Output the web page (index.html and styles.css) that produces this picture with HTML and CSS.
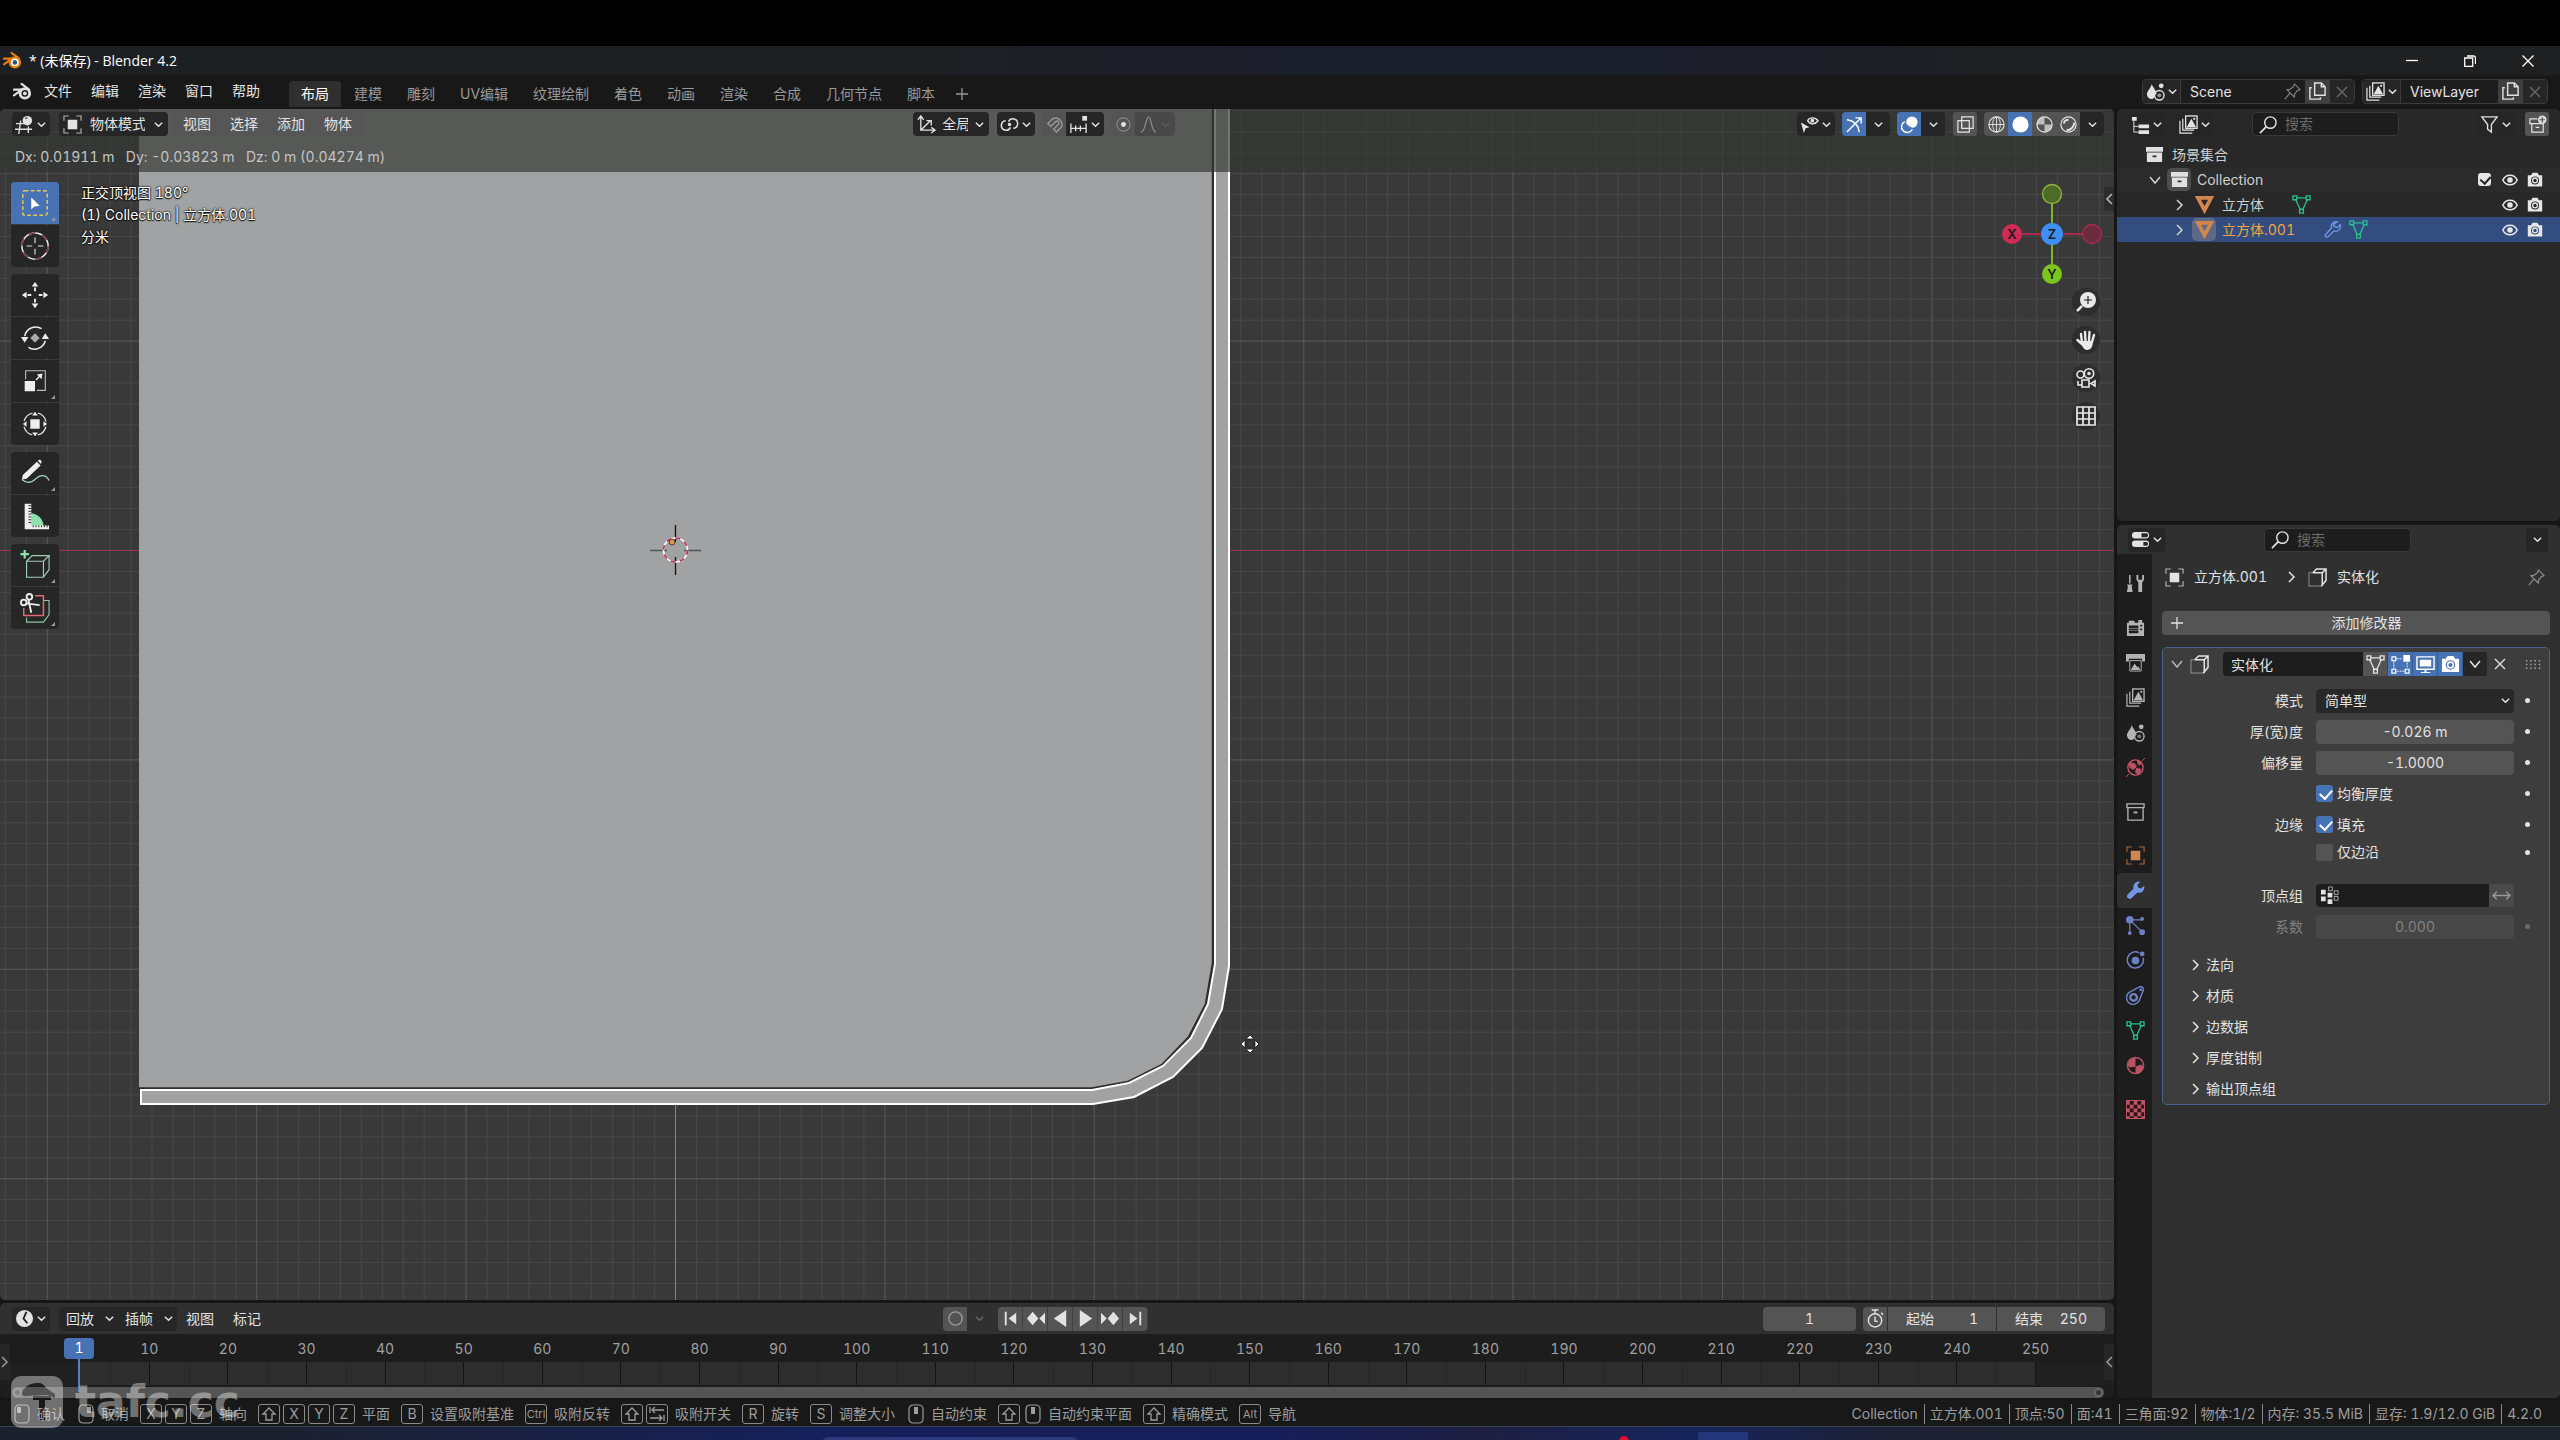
FILE: index.html
```html
<!DOCTYPE html>
<html lang="zh-CN">
<head>
<meta charset="utf-8">
<meta name="viewport" content="width=device-width, initial-scale=1">
<title>* (未保存) - Blender 4.2</title>
<link rel="stylesheet" href="styles.css">
</head>
<body>
<svg class="sprite" aria-hidden="true">
  <symbol id="chev" viewBox="0 0 12 12"><path d="M2 4l4 4 4-4" fill="none" stroke="currentColor" stroke-width="1.6"/></symbol>
  <symbol id="right" viewBox="0 0 12 12"><path d="M3 1l5 5-5 5" fill="none" stroke="currentColor" stroke-width="1.5"/></symbol>
  <symbol id="down" viewBox="0 0 12 12"><path d="M1 3l5 6 5-6" fill="none" stroke="currentColor" stroke-width="1.5"/></symbol>
  <symbol id="left" viewBox="0 0 12 12"><path d="M9 1L4 6l5 5" fill="none" stroke="currentColor" stroke-width="1.5"/></symbol>
  <symbol id="plus" viewBox="0 0 12 12"><path d="M6 0v12M0 6h12" stroke="currentColor" stroke-width="1.3"/></symbol>
  <symbol id="cross" viewBox="0 0 12 12"><path d="M1 1l10 10M11 1L1 11" stroke="currentColor" stroke-width="1.4"/></symbol>
  <symbol id="blender" viewBox="0 0 20 20"><path d="M9 2l8 6M1 8h9M1 14l7-5" fill="none" stroke="currentColor" stroke-width="2.2" stroke-linecap="round"/><circle cx="12.5" cy="12" r="5" fill="none" stroke="currentColor" stroke-width="3"/><circle cx="12.5" cy="12" r="2" fill="currentColor"/></symbol>
  <symbol id="logo" viewBox="0 0 20 20"><path d="M9 2l8 6M1 8h9M1 14l7-5" fill="none" stroke="#e87d0d" stroke-width="2.2" stroke-linecap="round"/><circle cx="12.5" cy="12" r="6.5" fill="#e87d0d"/><circle cx="12.5" cy="12" r="4" fill="#fff"/><circle cx="12.5" cy="12" r="2.4" fill="#265787"/></symbol>
  <symbol id="view3d" viewBox="0 0 20 20"><path d="M1 9h9M0 15h18M6 6L4 20M14 12v7" fill="none" stroke="currentColor" stroke-width="1.4"/><circle cx="13" cy="6" r="5" fill="currentColor"/><path d="M11 4a3 3 0 0 1 2-1" stroke="#333" stroke-width="1.3" fill="none"/></symbol>
  <symbol id="object" viewBox="0 0 20 20"><rect x="5" y="5" width="10" height="10" fill="currentColor"/><path d="M1 6V1h5M14 1h5v5M19 14v5h-5M6 19H1v-5" fill="none" stroke="currentColor" stroke-width="1.2" opacity=".75"/></symbol>
  <symbol id="axes" viewBox="0 0 20 20"><path d="M4 2v14h14M4 16L14 6M1 5l3-4 3 4M15 13l4 3-4 3M10 6h5v5" fill="none" stroke="currentColor" stroke-width="1.4"/></symbol>
  <symbol id="pivot" viewBox="0 0 20 20"><path d="M9 7a5 5 0 1 1 5 7M11 13a5 5 0 1 1-5-7" fill="none" stroke="currentColor" stroke-width="1.6"/><circle cx="10" cy="10" r="1.8" fill="currentColor"/></symbol>
  <symbol id="magnet" viewBox="0 0 20 20"><path d="M3 9l3 3 5-5a2 2 0 0 1 3 3l-5 5 3 3 5-5A6.700 6.700 0 0 0 8 4z" fill="none" stroke="currentColor" stroke-width="1.500"/></symbol>
  <symbol id="snapinc" viewBox="0 0 20 20"><path d="M2 9v10M18 9v10M7 11v6M12 11v6M2 14h16" fill="none" stroke="currentColor" stroke-width="1.4"/><rect x="14" y="1" width="5" height="5" fill="currentColor"/></symbol>
  <symbol id="prop" viewBox="0 0 20 20"><circle cx="10" cy="10" r="7" fill="none" stroke="currentColor" opacity=".45"/><circle cx="10" cy="10" r="2.600" fill="currentColor"/></symbol>
  <symbol id="falloff" viewBox="0 0 20 20"><path d="M2 18c5 0 5-16 8-16s3 16 8 16" fill="none" stroke="currentColor" stroke-width="1.4"/></symbol>
  <symbol id="vis" viewBox="0 0 20 20"><path d="M8 6c2-4 8-4 11 0-3 4-8 5-11 0z" fill="none" stroke="currentColor" stroke-width="1.5"/><circle cx="13" cy="6" r="2" fill="currentColor"/><path d="M1 8l9 5-4 1-2 5z" fill="currentColor"/></symbol>
  <symbol id="gizmo" viewBox="0 0 20 20"><path d="M2 18L17 3M11 3h6v6M2 5c8 1 12 5 13 13" fill="none" stroke="currentColor" stroke-width="1.500"/></symbol>
  <symbol id="overlay" viewBox="0 0 20 20"><circle cx="12.500" cy="7.500" r="6" fill="currentColor"/><path d="M5 7a6 6 0 1 0 8 8" fill="none" stroke="currentColor" stroke-width="1.500"/><path d="M7 10a6 6 0 0 0 5 3" fill="none" stroke="#4772b3" stroke-width="1.200"/></symbol>
  <symbol id="xray" viewBox="0 0 20 20"><path d="M6 2h12v12H6zM14 6H2v12h12z" fill="none" stroke="currentColor" stroke-width="1.300"/><path d="M6 10v4h4" fill="none" stroke="currentColor" stroke-dasharray="2 1.500"/></symbol>
  <symbol id="wire" viewBox="0 0 20 20"><circle cx="10" cy="10" r="8" fill="none" stroke="currentColor" stroke-width="1.200"/><ellipse cx="10" cy="10" rx="4" ry="8" fill="none" stroke="currentColor"/><path d="M2 10h16M10 2v16" stroke="currentColor"/></symbol>
  <symbol id="solid" viewBox="0 0 20 20"><circle cx="10" cy="10" r="8.500" fill="currentColor"/></symbol>
  <symbol id="matprev" viewBox="0 0 20 20"><circle cx="10" cy="10" r="8" fill="none" stroke="currentColor" stroke-width="1.300"/><path d="M10 2a8 8 0 0 0-8 8h8zM10 10h8a8 8 0 0 1-8 8z" fill="currentColor" opacity=".75"/></symbol>
  <symbol id="rendered" viewBox="0 0 20 20"><circle cx="10" cy="10" r="8" fill="none" stroke="currentColor" stroke-width="1.300"/><path d="M5 9a5 5 0 0 1 5-4M8 16a8 8 0 0 0 8-8" stroke="currentColor" stroke-width="2" fill="none"/></symbol>
  <symbol id="scene" viewBox="0 0 20 20"><path d="M6 2c2 5 5 7 5 10 0 1-1 1-2 2 0 3-1 4-3 4a5 5 0 0 1-5-5c0-4 4-6 5-11z" fill="currentColor"/><circle cx="16" cy="4" r="2.500" fill="currentColor"/><circle cx="14" cy="14" r="5" fill="none" stroke="currentColor" stroke-width="1.500"/><circle cx="14" cy="14" r="2" fill="currentColor" opacity=".6"/></symbol>
  <symbol id="layers" viewBox="0 0 20 20"><path d="M1 6v13h13M4 4v12h12" fill="none" stroke="currentColor" stroke-width="1.300"/><rect x="7" y="1" width="12" height="13" fill="none" stroke="currentColor" stroke-width="1.400"/><path d="M8 13l5-9 5 9z" fill="currentColor"/><circle cx="16" cy="4" r="1.200" fill="currentColor"/></symbol>
  <symbol id="pin" viewBox="0 0 20 20"><path d="M12 2l6 6-3 1-3 4v3L4 8h3l4-3zM7 12l-5 6" fill="none" stroke="currentColor" stroke-width="1.300" stroke-linejoin="round"/></symbol>
  <symbol id="copy" viewBox="0 0 20 20"><path d="M7 1h7l4 4v9H7zM14 1v4h4M4 6H2v12h11v-2" fill="none" stroke="currentColor" stroke-width="1.500"/></symbol>
  <symbol id="tree" viewBox="0 0 20 20"><path d="M1 2h5v4H1zM8 10h11v4H8zM8 16h11v4H8z" fill="currentColor"/><path d="M3 6v12h5M3 12h5" fill="none" stroke="currentColor"/></symbol>
  <symbol id="search" viewBox="0 0 20 20"><circle cx="12" cy="8" r="6" fill="none" stroke="currentColor" stroke-width="1.500"/><path d="M8 12l-7 7" stroke="currentColor" stroke-width="1.800"/></symbol>
  <symbol id="filter" viewBox="0 0 20 20"><path d="M2 2h16l-6 8v8l-4-3v-5z" fill="none" stroke="currentColor" stroke-width="1.400"/></symbol>
  <symbol id="newcol" viewBox="0 0 20 20"><path d="M10 4H2v5h14M4 9v9h12V9M8 13h4" fill="none" stroke="currentColor" stroke-width="1.300"/><circle cx="15" cy="5" r="4.500" fill="currentColor"/><path d="M15 2v6M12 5h6" stroke="#555" stroke-width="1.300"/></symbol>
  <symbol id="coll" viewBox="0 0 20 20"><path d="M1 2h18v5H1zM2 8h16v10H2z" fill="currentColor"/><path d="M8 11h4v2H8z" fill="#2a2a2a"/></symbol>
  <symbol id="collo" viewBox="0 0 20 20"><path d="M1 2h18v4H1zM2 6h16v13H2z" fill="none" stroke="currentColor" stroke-width="1.400"/><path d="M8 10h4v2H8z" fill="currentColor"/></symbol>
  <symbol id="tri" viewBox="0 0 20 20"><path d="M3 3h14l-7 13z" fill="none" stroke="currentColor" stroke-width="4"/></symbol>
  <symbol id="mesh" viewBox="0 0 20 20"><path d="M4 5l5 11M16 5l-5 11M5 3h10" fill="none" stroke="currentColor" stroke-width="1.400"/><path d="M1 1h4v4H1zM15 1h4v4h-4zM8 15h4v4H8z" fill="none" stroke="currentColor" stroke-width="1.400"/></symbol>
  <symbol id="wrench" viewBox="0 0 20 20"><path d="M15 1a5.500 5.500 0 0 0-7 7L2 14a2.700 2.700 0 0 0 4 4l6-6a5.500 5.500 0 0 0 7-7l-3 3-3-1-1-3z" fill="currentColor"/></symbol>
  <symbol id="wrencho" viewBox="0 0 20 20"><path d="M15 2a5 5 0 0 0-6 6.500L3 15a1.500 1.500 0 0 0 2.500 2.500l6-6A5 5 0 0 0 18 5l-3 3-3-1-1-2z" fill="none" stroke="currentColor" stroke-width="1.400"/></symbol>
  <symbol id="eye" viewBox="0 0 20 20"><path d="M1 10c4-8 14-8 18 0-4 8-14 8-18 0z" fill="none" stroke="currentColor" stroke-width="2"/><circle cx="10" cy="10" r="3.500" fill="currentColor"/></symbol>
  <symbol id="cam" viewBox="0 0 20 20"><path fill-rule="evenodd" d="M1 4h4l2-3h6l2 3h4v14H1zM10 5.500a5 5 0 1 0 0 10 5 5 0 0 0 0-10z" fill="currentColor"/><circle cx="10" cy="10.500" r="3" fill="none" stroke="currentColor" stroke-width="1.600"/></symbol>
  <symbol id="props" viewBox="0 0 20 20"><rect x="1" y="2" width="18" height="7" rx="3.500" fill="currentColor"/><rect x="1" y="11" width="18" height="7" rx="3.500" fill="currentColor"/><path d="M11 3.500h5a2 2 0 0 1 0 4h-5zM13 12.500h3a2 2 0 0 1 0 4h-3z" fill="#282828"/></symbol>
  <symbol id="tools" viewBox="0 0 20 20"><path d="M4 1v9" stroke="currentColor" stroke-width="1.600"/><path d="M1 11h6l-1 2 1 6H1l1-6zM11 1v5l2 3v10h4V9l2-3V1h-2v5h-4V1z" fill="currentColor"/></symbol>
  <symbol id="render" viewBox="0 0 20 20"><path fill-rule="evenodd" d="M1 5h2V3h6v2h4V2h4v3h2v14H1zM15 7h2v2h-2zM15 11h2v2h-2zM3 8h10v8H3z" fill="currentColor"/><path d="M3 11h10M3 13h10" stroke="currentColor" stroke-width=".6"/></symbol>
  <symbol id="output" viewBox="0 0 20 20"><path d="M0 1h20v8h-3V6H3v3H0z" fill="currentColor"/><path d="M4 8h12v11H4z" fill="none" stroke="currentColor"/><path d="M5 18l4-7 3 4 1-1 2 4z" fill="currentColor"/></symbol>
  <symbol id="world" viewBox="0 0 20 20"><circle cx="10" cy="10" r="8" fill="none" stroke="currentColor" stroke-width="1.500"/><path d="M4 5l5 1 2 3-3 3-4-2zM12 3l4 1-1 3h-2zM11 11l5 1-3 5-3-2zM0 20l3-3M17 3l3-3" fill="currentColor" stroke="currentColor"/></symbol>
  <symbol id="parts" viewBox="0 0 20 20"><circle cx="4" cy="4" r="4" fill="currentColor"/><circle cx="17" cy="3" r="2" fill="currentColor"/><circle cx="4" cy="18" r="2" fill="currentColor"/><circle cx="17" cy="17" r="3" fill="currentColor"/><path d="M4 4h13M4 4v14M4 4l13 13" stroke="currentColor" stroke-width="1.300"/></symbol>
  <symbol id="phys" viewBox="0 0 20 20"><path d="M14 2a8.500 8.500 0 1 0 4 5" fill="none" stroke="currentColor" stroke-width="1.500"/><circle cx="10" cy="10" r="4" fill="currentColor"/><circle cx="17" cy="3" r="2.500" fill="currentColor"/></symbol>
  <symbol id="constr" viewBox="0 0 20 20"><path d="M3 7L14 1a3 3 0 0 1 4 4l-4 10A7 7 0 1 1 3 7z" fill="none" stroke="currentColor" stroke-width="1.600"/><circle cx="8" cy="12" r="3.500" fill="none" stroke="currentColor" stroke-width="2.500"/><circle cx="15.500" cy="4" r="1.500" fill="currentColor"/></symbol>
  <symbol id="mat" viewBox="0 0 20 20"><circle cx="10" cy="10" r="8.500" fill="none" stroke="currentColor" stroke-width="1.600"/><path d="M10 2v9l-6 1-2-2a8 8 0 0 1 8-8zM10 11l6-2 2 2a8 8 0 0 1-8 8z" fill="currentColor"/></symbol>
  <symbol id="tex" viewBox="0 0 20 20"><path d="M0 0h20v20H0z" fill="currentColor"/><path d="M4 1h4v4H4zM12 1h4v4h-4zM1 5h3v4H1zM8 5h4v4H8zM16 5h3v4h-3zM4 9h4v4H4zM12 9h4v4h-4zM1 13h3v4H1zM8 13h4v4H8zM16 13h3v4h-3zM4 17h4v2H4zM12 17h4v2h-4z" fill="#2a1418"/></symbol>
  <symbol id="solidify" viewBox="0 0 20 20"><path d="M5 5l4-4h10v12l-5 6M5 5h10v14M15 5l4-4" fill="none" stroke="currentColor" stroke-width="1.600"/><path d="M5 5H1v14h14" fill="none" stroke="currentColor" opacity=".55"/></symbol>
  <symbol id="editm" viewBox="0 0 20 20"><path d="M3 7v8M6 17h8M17 8v6M6 4h6" fill="none" stroke="currentColor" stroke-dasharray="2 1"/><path d="M1 2h4v4H1zM1 15h4v4H1zM15 15h4v4h-4z" fill="none" stroke="currentColor" stroke-width="1.300"/><path d="M13 0h7v7h-7z" fill="currentColor"/></symbol>
  <symbol id="screen" viewBox="0 0 20 20"><path d="M1 2h18v13H1z" fill="none" stroke="currentColor" stroke-width="1.500"/><path d="M4 5h12v7H4zM9 15h2v3H9zM5 18h10v1H5z" fill="currentColor"/></symbol>
  <symbol id="grip" viewBox="0 0 20 20"><path d="M1 6h18M1 10h18M1 14h18" stroke="currentColor" stroke-width="1.500" stroke-dasharray="1.500 3"/></symbol>
  <symbol id="vgroup" viewBox="0 0 20 20"><path d="M1 4h5v5H1zM1 11h5v5H1zM8 7h5v5H8zM8 14h5v5H8z" fill="currentColor"/><path d="M9 1h4v4H9zM15 5h4v4h-4zM15 11h4v4h-4z" fill="none" stroke="currentColor" opacity=".7"/></symbol>
  <symbol id="arrows" viewBox="0 0 20 20"><path d="M1 10h18M5 6l-4 4 4 4M15 6l4 4-4 4" fill="none" stroke="currentColor" stroke-width="1.500"/></symbol>
  <symbol id="clock" viewBox="0 0 20 20"><circle cx="10" cy="10" r="9" fill="currentColor"/><path d="M12 3L9 10l4 5" fill="none" stroke="#222" stroke-width="2"/></symbol>
  <symbol id="rec" viewBox="0 0 20 20"><circle cx="10" cy="10" r="7" fill="none" stroke="currentColor" stroke-width="1.500"/></symbol>
  <symbol id="first" viewBox="0 0 20 20"><path d="M4 3h2v14H4zM16 4v12l-8-6z" fill="currentColor"/></symbol>
  <symbol id="prevk" viewBox="0 0 20 20"><path d="M7 3l6 7-6 7-6-7zM20 4v12l-6-6z" fill="currentColor"/></symbol>
  <symbol id="playb" viewBox="0 0 20 20"><path d="M16 1v18L3 10z" fill="currentColor"/></symbol>
  <symbol id="play" viewBox="0 0 20 20"><path d="M4 1v18l13-9z" fill="currentColor"/></symbol>
  <symbol id="nextk" viewBox="0 0 20 20"><path d="M13 3l6 7-6 7-6-7zM0 4v12l6-6z" fill="currentColor"/></symbol>
  <symbol id="last" viewBox="0 0 20 20"><path d="M14 3h2v14h-2zM4 4v12l8-6z" fill="currentColor"/></symbol>
  <symbol id="timer" viewBox="0 0 20 20"><circle cx="9.500" cy="12" r="7" fill="none" stroke="currentColor" stroke-width="1.500"/><path d="M6 1h7M9.500 1v4M9.500 8v5h3M16 4l2 2" fill="none" stroke="currentColor" stroke-width="1.500"/></symbol>
  <symbol id="mouse" viewBox="0 0 16 20"><rect x="1" y="1" width="14" height="18" rx="4" fill="none" stroke="currentColor" stroke-width="1.200"/></symbol>
  <symbol id="shift" viewBox="0 0 16 16"><path d="M8 2l6 6h-3v6H5V8H2z" fill="none" stroke="currentColor" stroke-width="1.300"/></symbol>
  <symbol id="tab" viewBox="0 0 16 16"><path d="M1 1v6M3 4h12M6 1L3 4l3 3M15 9v6M1 12h12M10 9l3 3-3 3" fill="none" stroke="currentColor" stroke-width="1.300"/></symbol>
</svg>

<div class="screen">
  <header class="titlebar">
    <svg class="i"><use href="#logo"/></svg>
    <h1>* (未保存) - Blender 4.2</h1>
    <div class="winbtns">
      <button aria-label="最小化"><svg viewBox="0 0 12 12"><path d="M0 5.500h12" stroke="#fff" stroke-width="1.300"/></svg></button>
      <button aria-label="还原"><svg viewBox="0 0 12 12"><path d="M.7 3h8v8.300h-8zM3 1h6.500a2 2 0 0 1 2 2v6" fill="none" stroke="#fff" stroke-width="1.300"/></svg></button>
      <button aria-label="关闭"><svg viewBox="0 0 12 12"><path d="M.5.5l11 11M11.500.5l-11 11" stroke="#fff" stroke-width="1.300"/></svg></button>
    </div>
  </header>

  <div class="topbar">
    <button class="bmenu" aria-label="Blender"><svg class="i"><use href="#blender"/></svg></button>
    <nav class="menus"><button>文件</button><button>编辑</button><button>渲染</button><button>窗口</button><button>帮助</button></nav>
    <nav class="tabs">
      <button class="on">布局</button><button>建模</button><button>雕刻</button><button>UV编辑</button><button>纹理绘制</button><button>着色</button><button>动画</button><button>渲染</button><button>合成</button><button>几何节点</button><button>脚本</button><button class="add" aria-label="添加工作区"><svg class="s"><use href="#plus"/></svg></button>
    </nav>
    <div class="idblock">
      <button class="ed dark" aria-label="浏览场景"><svg class="i"><use href="#scene"/></svg><svg class="c"><use href="#chev"/></svg></button>
      <input class="scene-name" aria-label="场景" value="Scene">
      <button class="pinb" aria-label="固定"><svg class="i"><use href="#pin"/></svg></button>
      <button class="cp" aria-label="新建场景"><svg class="i"><use href="#copy"/></svg></button>
      <button class="rm" aria-label="删除场景"><svg class="s"><use href="#cross"/></svg></button>
    </div>
    <div class="idblock">
      <button class="ed dark" aria-label="浏览视图层"><svg class="i"><use href="#layers"/></svg><svg class="c"><use href="#chev"/></svg></button>
      <input class="layer-name" aria-label="视图层" value="ViewLayer">
      <button class="cp" aria-label="新建视图层"><svg class="i"><use href="#copy"/></svg></button>
      <button class="rm" aria-label="删除视图层"><svg class="s"><use href="#cross"/></svg></button>
    </div>
  </div>

  <main class="workspace">
    <div class="leftcol">
      <section class="viewport" aria-label="3D 视图">
        <svg class="canvas" aria-hidden="true">
          <defs>
            <pattern id="minor" x="675" y="441" width="20.940" height="20.940" patternUnits="userSpaceOnUse"><path d="M.5 0v21M0 .5h21" stroke="#474747"/></pattern>
            <pattern id="major" x="675" y="441" width="209.400" height="209.400" patternUnits="userSpaceOnUse"><path d="M.5 0v210M0 .5h210" stroke="#545454"/></pattern>
          </defs>
          <rect width="100%" height="100%" fill="#393939"/>
          <rect width="100%" height="100%" fill="url(#minor)"/>
          <rect width="100%" height="100%" fill="url(#major)"/>
          <path d="M0 441.500h4000" stroke="#9a3549"/>
          <path d="M675.500 0v4000" stroke="#7f9827"/>
          <path d="M139 0h1074v854l-7 40-17 34-27 27-34 17-37 7H139z" fill="#a1a2a3"/>
          <path d="M1213 0v854l-7 41-17 33-27 28-34 17-36 6.500H139" fill="none" stroke="#2c2d2e" stroke-width="2.500"/>
          <path d="M1215 0v855l-7 40-17 34-28 28-34 17-37 6.500H141V995h952l41-7 39-20 29-29 20-39 7-43V0z" fill="#a1a2a3"/>
          <path d="M1215 -5v860l-7 40-17 34-28 28-34 17-37 7H141v14h952l41-7 39-20 29-29 20-39 7-43V-5" fill="none" stroke="#fff" stroke-width="2"/>
          <g fill="none">
            <path d="M650 441.500h17M684 441.500h17" stroke="#4c5557" stroke-width="1.300"/><path d="M675.500 416v17M675.500 448v18" stroke="#111" stroke-width="1.300"/>
            <circle cx="675.500" cy="441" r="12" stroke="#fff" stroke-width="1.600"/><circle cx="675.500" cy="441" r="12" stroke="#c2255c" stroke-width="1.600" stroke-dasharray="4.700 4.700"/>
            <circle cx="672" cy="433" r="3" fill="#d8954a" stroke="#5a3b20"/>
          </g>
          <g transform="translate(1250 935)" fill="#fff" stroke="#111" stroke-width=".8"><path d="M0-9l4 4H-4zM0 9l4-4H-4zM-9 0l4-4v8zM9 0l-4-4v8z"/><circle r="3.500" fill="none" stroke="#222"/></g>
        </svg>

        <div class="vhead">
          <div class="bar">
            <button class="ed dark" aria-label="编辑器类型"><svg class="i"><use href="#view3d"/></svg><svg class="c"><use href="#chev"/></svg></button>
            <label class="combo dark mode"><svg class="i"><use href="#object"/></svg><select aria-label="模式"><option>物体模式</option></select><svg class="c"><use href="#chev"/></svg></label>
            <nav class="menus"><button>视图</button><button>选择</button><button>添加</button><button>物体</button></nav>
            <span class="sp-a"></span>
            <label class="combo dark orient"><svg class="i"><use href="#axes"/></svg><select aria-label="坐标系"><option>全局</option></select><svg class="c"><use href="#chev"/></svg></label>
            <button class="ed dark" aria-label="轴心点"><svg class="i"><use href="#pivot"/></svg><svg class="c"><use href="#chev"/></svg></button>
            <div class="group"><button class="ib lit dim" aria-label="吸附"><svg class="i"><use href="#magnet"/></svg></button><button class="ed dark" aria-label="吸附至"><svg class="i"><use href="#snapinc"/></svg><svg class="c"><use href="#chev"/></svg></button></div>
            <div class="group"><button class="ib lit" aria-label="衰减编辑"><svg class="i"><use href="#prop"/></svg></button><button class="ed faint" aria-label="衰减"><svg class="i"><use href="#falloff"/></svg><svg class="c fade"><use href="#chev"/></svg></button></div>
            <span class="sp-b"></span>
            <button class="ed dark" aria-label="可见性"><svg class="i"><use href="#vis"/></svg><svg class="c"><use href="#chev"/></svg></button>
            <div class="group"><button class="ib blue" aria-label="Gizmo"><svg class="i"><use href="#gizmo"/></svg></button><button class="ib dark" aria-label="Gizmo 选项"><svg class="c"><use href="#chev"/></svg></button></div>
            <div class="group"><button class="ib blue" aria-label="叠加层"><svg class="i"><use href="#overlay"/></svg></button><button class="ib dark" aria-label="叠加层选项"><svg class="c"><use href="#chev"/></svg></button></div>
            <button class="ib lit" aria-label="透视模式"><svg class="i"><use href="#xray"/></svg></button>
            <div class="group"><button class="ib lit" aria-label="线框"><svg class="i"><use href="#wire"/></svg></button><button class="ib blue" aria-label="实体"><svg class="i"><use href="#solid"/></svg></button><button class="ib lit" aria-label="材质预览"><svg class="i"><use href="#matprev"/></svg></button><button class="ib lit" aria-label="渲染预览"><svg class="i"><use href="#rendered"/></svg></button><button class="ib dark" aria-label="着色选项"><svg class="c"><use href="#chev"/></svg></button></div>
          </div>
          <p class="status">Dx: 0.01911 m&nbsp;&nbsp; Dy: -0.03823 m&nbsp;&nbsp; Dz: 0 m (0.04274 m)</p>
        </div>

        <div class="vbody">
          <div class="toolbar">
            <div class="tgroup">
              <button class="on more" aria-label="框选"><svg viewBox="0 0 32 32"><rect x="3" y="3" width="26" height="26" rx="2" fill="none" stroke="#e8c65a" stroke-width="1.600" stroke-dasharray="4 2.500"/><path d="M12 10v13l3-3 6-1z" fill="#fff"/></svg></button>
              <button aria-label="游标"><svg viewBox="0 0 32 32"><circle cx="16" cy="16" r="14" fill="none" stroke="#e9e9e9" stroke-width="1.600"/><circle cx="16" cy="16" r="14" fill="none" stroke="#7d3044" stroke-width="1.600" stroke-dasharray="7.330 7.330"/><path d="M16 7v6M16 19v6M7 16h6M19 16h6" stroke="#ddd" stroke-width="1.200"/></svg></button>
            </div>
            <div class="tgroup">
              <button aria-label="移动"><svg viewBox="0 0 32 32" fill="#eee"><path d="M16 2l3.500 5h-7zM16 30l3.500-5h-7zM2 16l5-3.500v7zM30 16l-5-3.500v7zM15 8h2v4h-2zM15 20h2v4h-2zM8 15h4v2H8zM20 15h4v2h-4z"/></svg></button>
              <button aria-label="旋转"><svg viewBox="0 0 32 32"><path d="M5 14a12 12 0 0 1 18-8M27 19a12 12 0 0 1-18 7" fill="none" stroke="#eee" stroke-width="1.600"/><path d="M1 15h8l-4 6zM23 17h8l-4-6z" fill="#eee"/><path d="M16 11l5 5-5 5-5-5z" fill="#aaa"/></svg></button>
              <button class="more" aria-label="缩放"><svg viewBox="0 0 32 32"><path d="M6 14V5h21v21H18" fill="none" stroke="#bbb" stroke-width="1.200"/><path d="M5 16h11v11H5zM24 8l-1 6-5-5z" fill="#eee"/><path d="M17 15l4-4" stroke="#eee" stroke-width="1.600"/></svg></button>
              <button aria-label="变换"><svg viewBox="0 0 32 32"><circle cx="16" cy="16" r="12" fill="none" stroke="#ddd" stroke-width="1.400" stroke-dasharray="12.800 6" stroke-dashoffset="-3"/><path d="M11 11h10v10H11zM16 3l3 4h-6zM16 29l3-4h-6zM3 16l4-3v6zM29 16l-4-3v6z" fill="#eee"/></svg></button>
            </div>
            <div class="tgroup">
              <button class="more" aria-label="标注"><svg viewBox="0 0 32 32"><path d="M2 23c6 5 11 3 15-1 5-5 11-4 14 2" fill="none" stroke="#a5d8c0" stroke-width="1.400"/><path d="M18 4l4 4L7 22l-5 1 1-5zM19 3l1-1q3-1 3 3l-1 1z" fill="#eee"/></svg></button>
              <button aria-label="测量"><svg viewBox="0 0 32 32"><path d="M11 13a14 14 0 0 1 14 14H11z" fill="#8fe0af"/><path d="M5 3h7v25H5zM5 26h26v4H5z" fill="#eee"/><path d="M9 5h3M9 8h3M9 11h3M9 14h3M9 17h3M9 20h3M9 23h3M14 26v2M17 26v2M20 26v2M23 26v2M26 26v2M29 26v2" stroke="#222"/></svg></button>
            </div>
            <div class="tgroup">
              <button class="more" aria-label="添加立方体"><svg viewBox="0 0 32 32"><path d="M5 0v9M.500 4.500h9" stroke="#8fe0af" stroke-width="2.400"/><path d="M7 12h18v17H7zM7 12l6-6h18l-6 6M31 6v15l-6 8" fill="none" stroke="#9ecdb2" stroke-width="1.200"/></svg></button>
              <button class="more" aria-label="切割"><svg viewBox="0 0 32 32"><path d="M7 26v5h18l6-8V8h-6" fill="none" stroke="#86c9a5" stroke-width="1.200"/><path d="M16 3h9v21H4v-8" fill="none" stroke="#e06a78" stroke-width="1.600"/><path d="M9 7l3 14M6 11l15 2" stroke="#eee" stroke-width="2"/><circle cx="10" cy="4" r="3" fill="none" stroke="#eee" stroke-width="2"/><circle cx="4" cy="10" r="3" fill="none" stroke="#eee" stroke-width="2"/></svg></button>
            </div>
          </div>
          <div class="info"><p>正交顶视图 180°</p><p>(1) Collection | 立方体.001</p><p>分米</p></div>
          <div class="navcol">
            <svg class="axisgizmo" viewBox="0 0 104 104" role="img" aria-label="视图轴">
              <path d="M52 22v60" stroke="#80b52a" stroke-width="2"/><path d="M22 52h60" stroke="#a82b4e" stroke-width="2"/>
              <circle cx="52" cy="12" r="9.500" fill="#4d6b26" stroke="#8fb63e" stroke-width="1.300"/><circle cx="92" cy="52" r="9.500" fill="#6d2b40" stroke="#a82b4e" stroke-width="1.300"/>
              <circle cx="12" cy="52" r="10" fill="#d12a57"/><circle cx="52" cy="92" r="10" fill="#7bc61c"/><circle cx="52" cy="52" r="11" fill="#3d8ff5"/>
              <g class="axl"><text x="12" y="57">X</text><text x="52" y="97">Y</text><text x="52" y="57">Z</text></g>
            </svg>
            <button aria-label="缩放视图"><svg viewBox="0 0 20 20"><circle cx="12" cy="8" r="8" fill="#e9e9e9"/><path d="M6 14l-5 5" stroke="#e9e9e9" stroke-width="2.500"/><path d="M12 4v8M8 8h8" stroke="#222" stroke-width="1.200"/></svg></button>
            <button aria-label="平移视图"><svg viewBox="0 0 20 20"><path d="M6 13L5 4M9.500 11L9 2M13 11l.5-9M16 12l2-7M7 15L1.500 10" stroke="#e9e9e9" stroke-width="2.400" stroke-linecap="round"/><path d="M5 11h12c0 5-2 9-6 9-3 0-5-3-6-9z" fill="#e9e9e9"/></svg></button>
            <button aria-label="摄像机视图"><svg viewBox="0 0 20 20" fill="none" stroke="#e9e9e9" stroke-width="1.600"><circle cx="4.500" cy="6.500" r="3.500"/><circle cx="13" cy="5.500" r="4.700"/><circle cx="13" cy="5.500" r="1"/><path d="M6 12h7v7H6zM2 13v4h4M19 13v5l-4-2.500z"/></svg></button>
            <button aria-label="正交切换"><svg viewBox="0 0 20 20"><path d="M1 1h18v18H1zM7 1v18M13 1v18M1 7h18M1 13h18" fill="none" stroke="#e9e9e9" stroke-width="1.700"/></svg></button>
          </div>
        </div>
        <button class="flap" aria-label="展开侧栏"><svg class="s"><use href="#left"/></svg></button>
      </section>

      <section class="timeline" aria-label="时间线">
        <div class="bar thead">
          <button class="ed dark" aria-label="编辑器类型"><svg class="i"><use href="#clock"/></svg><svg class="c"><use href="#chev"/></svg></button>
          <div class="group"><button class="pop">回放<svg class="c"><use href="#chev"/></svg></button><button class="pop">插帧<svg class="c"><use href="#chev"/></svg></button></div>
          <nav class="menus"><button>视图</button><button>标记</button></nav>
          <span class="sp-c"></span>
          <div class="group"><button class="ib lit dim" aria-label="自动插帧"><svg class="i"><use href="#rec"/></svg></button><button class="ib fade" aria-label="自动插帧选项"><svg class="c"><use href="#chev"/></svg></button></div>
          <div class="group play">
            <button aria-label="起始帧"><svg class="i"><use href="#first"/></svg></button><button aria-label="上一关键帧"><svg class="i"><use href="#prevk"/></svg></button><button aria-label="倒放"><svg class="i"><use href="#playb"/></svg></button><button aria-label="播放"><svg class="i"><use href="#play"/></svg></button><button aria-label="下一关键帧"><svg class="i"><use href="#nextk"/></svg></button><button aria-label="末帧"><svg class="i"><use href="#last"/></svg></button>
          </div>
          <span class="sp-d"></span>
          <input class="frame" aria-label="当前帧" value="1">
          <div class="group range"><button class="ib lit" aria-label="预览范围"><svg class="i"><use href="#timer"/></svg></button><label><span>起始</span><input value="1"></label><label><span>结束</span><input value="250"></label></div>
        </div>
        <div class="track">
          <ol class="ruler"><li>10</li><li>20</li><li>30</li><li>40</li><li>50</li><li>60</li><li>70</li><li>80</li><li>90</li><li>100</li><li>110</li><li>120</li><li>130</li><li>140</li><li>150</li><li>160</li><li>170</li><li>180</li><li>190</li><li>200</li><li>210</li><li>220</li><li>230</li><li>240</li><li>250</li></ol>
          <div class="scroll"><i></i><i></i></div>
          <div class="playhead"><b>1</b></div>
          <button class="tflap l" aria-label="展开通道"><svg class="s"><use href="#right"/></svg></button>
          <button class="tflap r" aria-label="展开侧栏"><svg class="s"><use href="#left"/></svg></button>
        </div>
      </section>
    </div>

    <div class="rightcol">
      <section class="outliner" aria-label="大纲视图">
        <div class="bar ohead">
          <button class="ed dark" aria-label="编辑器类型"><svg class="i"><use href="#tree"/></svg><svg class="c"><use href="#chev"/></svg></button>
          <button class="ed dark" aria-label="显示模式"><svg class="i"><use href="#layers"/></svg><svg class="c"><use href="#chev"/></svg></button>
          <label class="search"><svg class="i"><use href="#search"/></svg><input type="search" placeholder="搜索" aria-label="搜索"></label>
          <button class="ed dark" aria-label="过滤"><svg class="i"><use href="#filter"/></svg><svg class="c"><use href="#chev"/></svg></button>
          <button class="ib lit" aria-label="新建集合"><svg class="i"><use href="#newcol"/></svg></button>
        </div>
        <ul class="tree">
          <li class="l0"><span class="ic"><svg class="i"><use href="#coll"/></svg></span>场景集合</li>
          <li class="l1 alt"><svg class="ar"><use href="#down"/></svg><span class="ic halo"><svg class="i"><use href="#coll"/></svg></span>Collection
            <span class="tog"><input type="checkbox" class="wcheck" aria-label="排除" checked><svg class="i"><use href="#eye"/></svg><svg class="i"><use href="#cam"/></svg></span></li>
          <li class="l2"><svg class="ar"><use href="#right"/></svg><span class="ic orange"><svg class="i"><use href="#tri"/></svg></span>立方体
            <span class="data"><svg class="i green"><use href="#mesh"/></svg></span><span class="tog"><svg class="i"><use href="#eye"/></svg><svg class="i"><use href="#cam"/></svg></span></li>
          <li class="l2 sel"><svg class="ar"><use href="#right"/></svg><span class="ic orange halo"><svg class="i"><use href="#tri"/></svg></span><em>立方体.001</em>
            <span class="data"><svg class="i bluei"><use href="#wrencho"/></svg><svg class="i green"><use href="#mesh"/></svg></span><span class="tog"><svg class="i"><use href="#eye"/></svg><svg class="i"><use href="#cam"/></svg></span></li>
        </ul>
      </section>

      <section class="properties" aria-label="属性">
        <div class="bar phead">
          <button class="ed dark" aria-label="编辑器类型"><svg class="i"><use href="#props"/></svg><svg class="c"><use href="#chev"/></svg></button>
          <label class="search"><svg class="i"><use href="#search"/></svg><input type="search" placeholder="搜索" aria-label="搜索属性"></label>
          <button class="ib dark" aria-label="选项"><svg class="c"><use href="#chev"/></svg></button>
        </div>
        <div class="pmain">
          <nav class="ptabs">
            <button aria-label="工具"><svg class="i"><use href="#tools"/></svg></button>
            <div><button aria-label="渲染"><svg class="i"><use href="#render"/></svg></button><button aria-label="输出"><svg class="i"><use href="#output"/></svg></button><button aria-label="视图层"><svg class="i"><use href="#layers"/></svg></button><button aria-label="场景"><svg class="i"><use href="#scene"/></svg></button><button class="red" aria-label="世界"><svg class="i"><use href="#world"/></svg></button></div>
            <button aria-label="集合"><svg class="i"><use href="#collo"/></svg></button>
            <div><button class="orange" aria-label="物体"><svg class="i"><use href="#object"/></svg></button><button class="bluei on" aria-label="修改器"><svg class="i"><use href="#wrench"/></svg></button><button class="bluep" aria-label="粒子"><svg class="i"><use href="#parts"/></svg></button><button class="bluep" aria-label="物理"><svg class="i"><use href="#phys"/></svg></button><button class="bluep" aria-label="约束"><svg class="i"><use href="#constr"/></svg></button><button class="green" aria-label="数据"><svg class="i"><use href="#mesh"/></svg></button><button class="red" aria-label="材质"><svg class="i"><use href="#mat"/></svg></button></div>
            <button class="red" aria-label="纹理"><svg class="i"><use href="#tex"/></svg></button>
          </nav>
          <div class="pcontent">
            <div class="crumbs"><svg class="i"><use href="#object"/></svg><span class="c1">立方体.001</span><svg class="s"><use href="#right"/></svg><svg class="i"><use href="#solidify"/></svg><span>实体化</span><button aria-label="固定"><svg class="i"><use href="#pin"/></svg></button></div>
            <button class="addmod"><svg class="s"><use href="#plus"/></svg><span>添加修改器</span></button>
            <div class="panel">
              <div class="mhead">
                <button class="exp" aria-label="折叠"><svg class="s"><use href="#down"/></svg></button>
                <svg class="i"><use href="#solidify"/></svg>
                <input class="mname" aria-label="名称" value="实体化">
                <button class="mb lit" aria-label="在编辑模式显示笼"><svg class="i"><use href="#mesh"/></svg></button><button class="mb blue" aria-label="编辑模式"><svg class="i"><use href="#editm"/></svg></button><button class="mb blue" aria-label="实时"><svg class="i"><use href="#screen"/></svg></button><button class="mb blue" aria-label="渲染"><svg class="i"><use href="#cam"/></svg></button><button class="ib dark" aria-label="选项"><svg class="s"><use href="#down"/></svg></button>
                <button class="del" aria-label="移除"><svg class="s"><use href="#cross"/></svg></button>
                <svg class="i grip"><use href="#grip"/></svg>
              </div>
              <div class="row"><label for="m">模式</label><span class="field drop"><select id="m"><option>简单型</option></select><svg class="c"><use href="#chev"/></svg></span><i class="dot"></i></div>
              <div class="row"><label for="t">厚(宽)度</label><input class="field num" id="t" value="-0.026 m"><i class="dot"></i></div>
              <div class="row"><label for="o">偏移量</label><input class="field num" id="o" value="-1.0000"><i class="dot"></i></div>
              <div class="row"><span></span><label class="ck"><input type="checkbox" checked>均衡厚度</label><i class="dot"></i></div>
              <div class="row"><span class="lab">边缘</span><label class="ck"><input type="checkbox" checked>填充</label><i class="dot"></i></div>
              <div class="row short"><span></span><label class="ck"><input type="checkbox">仅边沿</label><i class="dot"></i></div>
              <div class="row gap"><label for="v">顶点组</label><span class="vg"><span class="vgi"><svg class="i"><use href="#vgroup"/></svg><input id="v"></span><button aria-label="反转"><svg class="i"><use href="#arrows"/></svg></button></span></div>
              <div class="row off"><label for="f">系数</label><input class="field num" id="f" value="0.000" disabled><i class="dot"></i></div>
              <div class="subs">
                <button><svg class="s"><use href="#right"/></svg>法向</button><button><svg class="s"><use href="#right"/></svg>材质</button><button><svg class="s"><use href="#right"/></svg>边数据</button><button><svg class="s"><use href="#right"/></svg>厚度钳制</button><button><svg class="s"><use href="#right"/></svg>输出顶点组</button>
              </div>
            </div>
          </div>
        </div>
      </section>
    </div>
  </main>

  <footer class="statusbar">
    <ul class="keys">
      <li><svg class="m"><use href="#mouse"/><path d="M3 3h4v6H3z" fill="currentColor"/></svg><span>确认</span></li>
      <li><svg class="m"><use href="#mouse"/><path d="M9 3h4v6H9z" fill="currentColor"/></svg><span>取消</span></li>
      <li><kbd>X</kbd><kbd>Y</kbd><kbd>Z</kbd><span>轴向</span></li>
      <li><kbd><svg><use href="#shift"/></svg></kbd><kbd>X</kbd><kbd>Y</kbd><kbd>Z</kbd><span>平面</span></li>
      <li><kbd>B</kbd><span>设置吸附基准</span></li>
      <li><kbd class="sm">Ctrl</kbd><span>吸附反转</span></li>
      <li><kbd><svg><use href="#shift"/></svg></kbd><kbd><svg><use href="#tab"/></svg></kbd><span>吸附开关</span></li>
      <li><kbd>R</kbd><span>旋转</span></li>
      <li><kbd>S</kbd><span>调整大小</span></li>
      <li><svg class="m"><use href="#mouse"/><path d="M6 3h4v7H6z" fill="currentColor"/></svg><span>自动约束</span></li>
      <li><kbd><svg><use href="#shift"/></svg></kbd><svg class="m"><use href="#mouse"/><path d="M6 3h4v7H6z" fill="currentColor"/></svg><span>自动约束平面</span></li>
      <li><kbd><svg><use href="#shift"/></svg></kbd><span>精确模式</span></li>
      <li><kbd class="sm">Alt</kbd><span>导航</span></li>
    </ul>
    <ul class="stats"><li>Collection</li><li>立方体.001</li><li>顶点:50</li><li>面:41</li><li>三角面:92</li><li>物体:1/2</li><li>内存: 35.5 MiB</li><li>显存: 1.9/12.0 GiB</li><li>4.2.0</li></ul>
    <div class="watermark"><svg viewBox="0 0 52 52"><path fill-rule="evenodd" fill="#fff" d="M10 0h32a10 10 0 0 1 10 10v32a10 10 0 0 1-10 10H10A10 10 0 0 1 0 42V10A10 10 0 0 1 10 0zM12 14q6-8 16-7 4 0 7 5l9 6v4l-8-3-22 1q-5 0-2-6zM22 20h18v4h-6v20h-6V24h-6z"/></svg><span>tafc.cc</span></div>
  </footer>
  <div class="taskbar" aria-hidden="true">
    <svg><path d="M822 20v-4a6 6 0 0 1 6-6h244a6 6 0 0 1 6 6v4z" fill="#2c3a7c"/><circle cx="1624" cy="14" r="5" fill="#e0102a"/><path d="M1698 5h50v20h-50z" fill="#23367a"/></svg>
  </div>
</div>
</body>
</html>
```
FILE: styles.css
```css
* { box-sizing: border-box; margin: 0; padding: 0; }
body { background: #000; color: #e2e2e2; font: 14px/20px Inter, "Noto Sans CJK SC", sans-serif; font-variant-numeric: tabular-nums; }
button, input, select { font: inherit; font-variant-numeric: inherit; color: inherit; background: none; border: 0; outline: 0; min-width: 0; }
button { display: flex; align-items: center; justify-content: center; white-space: nowrap; }
select { appearance: none; }
input[type="search"] { appearance: none; }
ul, ol { list-style: none; }
em { font-style: normal; }
svg { display: block; flex: none; }
.sprite { position: absolute; width: 0; height: 0; }
.i { width: 19px; height: 19px; }
.c { width: 11px; height: 11px; }
.s { width: 12px; height: 12px; }

.screen { min-height: 100vh; display: flex; flex-direction: column; padding-top: 46px; }

.titlebar { height: 29px; display: flex; align-items: center; gap: 7px; padding-left: 3px; background: linear-gradient(90deg, #1d2022 35%, #1b1e2b 50%, #1b1e2b 65%, #1e2022 80%); }
.titlebar h1 { font: 400 14px/20px "Open Sans", "Noto Sans CJK SC", sans-serif; color: #fff; }
.winbtns { margin-left: auto; display: flex; padding-right: 3px; }
.winbtns button { width: 58px; height: 28px; }
.winbtns svg { width: 12px; height: 12px; }

.topbar { height: 34px; display: flex; align-items: flex-start; background: #181818; padding: 4px 12px 0 10px; }
.bmenu { width: 24px; height: 24px; }
.menus { display: flex; }
.menus button { height: 24px; padding: 0 9px; border: 0 solid transparent; border-width: 0 1px 0 0; }
.topbar .menus { margin-left: 1px; }
.tabs { display: flex; gap: 1px; margin: 2px auto 0 19px; }
.tabs button { height: 26px; padding: 0 12px; color: #989898; border-radius: 4px 4px 0 0; }
.tabs .on { background: #2f2f2f; color: #fff; }
.tabs .add { padding: 0 8px; }
.idblock { display: flex; height: 25px; border: 1px solid #3a3a3a; border-radius: 4px; background: #1d1d1d; margin-left: 7px; overflow: hidden; }
.idblock .ed { border-radius: 0; height: 23px; border-right: 1px solid #3a3a3a; }
.idblock input { padding-left: 9px; }
.scene-name { width: 99px; }
.layer-name { width: 97px; }
.pinb { width: 25px; color: #7a7a7a; }
.cp { width: 25px; background: #3f3f3f; }
.rm { width: 24px; background: #262626; color: #6a6a6a; }

.workspace { flex: 1; display: grid; grid-template-columns: minmax(0, 1fr) 443px; gap: 3px; background: #161616; padding-bottom: 2px; }
.leftcol { display: flex; flex-direction: column; gap: 3px; }
.rightcol { display: flex; flex-direction: column; gap: 4px; }

.bar { display: flex; align-items: center; }
.group { display: flex; }
.ed { width: 38px; height: 24px; gap: 2px; border-radius: 4px; }
.ib { width: 24px; height: 24px; border-radius: 3px; }
.dark { background: #262626; }
.lit { background: #545454; }
.blue { background: #4772b3; color: #fff; }
.dim { color: #9a9a9a; }
.faint { background: #484848; color: #8a8a8a; width: 40px; }
.fade { opacity: .3; }
.group > * { border-radius: 0; }
.group > :first-child { border-radius: 4px 0 0 4px; }
.group > :last-child { border-radius: 0 4px 4px 0; }
.combo { display: flex; align-items: center; height: 24px; border-radius: 4px; padding: 0 4px; gap: 8px; }
.combo .c { margin-left: auto; }
.mode { width: 109px; margin: 0 6px 0 9px; }
.orient { width: 76px; gap: 6px; margin-right: 8px; }

.viewport { position: relative; flex: 1; display: flex; flex-direction: column; border-radius: 5px; overflow: hidden; }
.canvas { position: absolute; inset: 0; width: 100%; height: 100%; }
.vhead { position: relative; height: 63px; background: rgba(52, 54, 52, .68); padding: 3px 10px 0 12px; }
.sp-a { flex: 546 1 0; }
.sp-b { flex: 616 1 0; }
.vhead .menus button { background: rgba(80, 80, 80, .25); }
.vhead .sp-a ~ .group, .vhead .sp-a ~ .ib { margin-left: 8px; }
.vhead .combo ~ .group { margin-left: 7px; }
.vhead .status { margin: 11px 0 0 3px; color: #c4c4c4; }
.vbody { position: relative; flex: 1; display: flex; align-items: flex-start; padding: 10px 10px 0 11px; }
.toolbar { display: flex; flex-direction: column; gap: 7px; }
.tgroup { display: flex; flex-direction: column; gap: 1px; }
.tgroup button { position: relative; width: 48px; height: 42px; background: #262626; }
.tgroup button:first-child { border-radius: 4px 4px 0 0; }
.tgroup button:last-child { border-radius: 0 0 4px 4px; }
.tgroup .on { background: #4772b3; }
.tgroup svg { width: 30px; height: 30px; }
.more::after { content: ""; position: absolute; right: 4px; bottom: 3px; border: 2px solid #999; border-left-color: transparent; border-top-color: transparent; }
.info { margin-left: 22px; line-height: 22px; color: #fff; text-shadow: 0 0 2px #000, 0 0 2px #000, 0 1px 1px #222; }
.navcol { margin-left: auto; display: flex; flex-direction: column; align-items: flex-end; gap: 10px; }
.navcol button { width: 28px; height: 28px; margin-right: 4px; border-radius: 14px; background: #2d2d2d; }
.navcol button svg { width: 20px; height: 20px; }
.axisgizmo { width: 104px; height: 104px; margin-bottom: -8px; }
.axl { font: 600 13px Inter, sans-serif; fill: #1c1c1c; text-anchor: middle; }
.flap { position: absolute; right: 0; top: 78px; height: 24px; width: 10px; color: #bbb; background: #2d2d2d; }

.timeline { display: flex; flex-direction: column; border-radius: 5px; overflow: hidden; background: #1d1d1d; }
.thead { height: 31px; background: #303030; padding: 0 9px 0 12px; }
.pop { height: 24px; padding: 0 3px 0 7px; gap: 10px; background: #262626; }
.thead .ed { margin-right: 9px; }
.sp-c { flex: 673 1 0; }
.sp-d { flex: 615 1 0; }
.play { margin-left: 7px; }
.play button { width: 25px; height: 24px; background: #545454; border-right: 1px solid #404040; }
.frame, .range label, .range .ib { height: 24px; background: #545454; }
.frame { width: 93px; text-align: center; border-radius: 4px; margin-right: 7px; }
.range { gap: 1px; }
.range label { width: 108px; display: flex; align-items: center; padding: 0 18px; }
.range span { flex: none; }
.range input { flex: 1; width: 20px; text-align: right; }
.track { position: relative; height: 64px; }
.ruler { display: flex; height: 51px; padding: 0 39px 0 110px; background: linear-gradient(#1d1d1d 28px, transparent 28px), linear-gradient(90deg, #202020 78px, #2d2d2d 78px, #2d2d2d calc(100% - 78px), #202020 calc(100% - 78px)); }
.ruler li { flex: 1; text-align: center; line-height: 29px; color: #a0a0a0; background: linear-gradient(#141414, #141414) center 28px / 1px 24px no-repeat, linear-gradient(#272727, #272727) left 28px / 1px 24px no-repeat; }
.scroll { display: flex; justify-content: space-between; height: 11px; margin: 2px 10px 0 12px; padding: 1px; border-radius: 6px; background: #545454; }
.scroll i { width: 9px; height: 9px; border-radius: 5px; border: 2px solid #686868; background: #333; }
.playhead { position: absolute; left: 78px; top: 4px; width: 2px; height: 54px; background: #5680c2; }
.playhead b { display: block; width: 30px; height: 21px; margin-left: -14px; border-radius: 4px; background: #4772b3; color: #fff; font-weight: 400; text-align: center; }
.tflap { position: absolute; top: 10px; height: 36px; width: 10px; color: #999; background: #262626; }
.tflap.l { left: 0; }
.tflap.r { right: 0; }

.outliner { flex: 412 1 0; background: #282828; border-radius: 5px; overflow: hidden; }
.ohead { padding: 3px 11px 6px 11px; gap: 10px; }
.ohead .search { margin: 0 auto 0 28px; }
.search { display: flex; align-items: center; gap: 7px; width: 147px; height: 24px; padding: 0 6px; background: #1d1d1d; border: 1px solid #383838; border-radius: 4px; }
.search input { width: 90px; }
.search input::placeholder { color: #6a6a6a; opacity: 1; }
.tree li { display: flex; align-items: center; height: 25px; padding-right: 12px; color: #d0d0d0; }
.tree .alt { background: #2b2b2b; }
.tree .sel { background: #334d80; }
.sel em { color: #f0a442; }
.l0 { padding-left: 25px; }
.l1 { padding-left: 32px; }
.l2 { padding-left: 57px; }
.ar { width: 12px; height: 12px; margin-right: 6px; }
.ic { width: 24px; height: 23px; margin-right: 6px; display: grid; place-items: center; border-radius: 5px; color: #e0e0e0; }
.halo { background: #4e4e4e; }
.sel .halo { background: #5e6a84; }
.orange, .ic.orange { color: #d1854f; }
.green { color: #27c08c; }
.bluei { color: #7396e6; }
.bluep { color: #6c82c4; }
.red { color: #bd5265; }
.data { display: flex; gap: 7px; margin-left: 28px; }
.tog { display: flex; align-items: center; gap: 7px; margin-left: auto; color: #e6e6e6; padding-right: 4px; }
.tog .i { width: 18px; height: 16px; }
input[type="checkbox"] { appearance: none; position: relative; display: block; width: 17px; height: 17px; border-radius: 3px; background: #545454; }
input[type="checkbox"]:checked { background: #4772b3; }
input[type="checkbox"]:checked::after { content: ""; position: absolute; left: 6px; top: 2px; width: 6px; height: 10px; border: solid #fff; border-width: 0 2px 2px 0; transform: rotate(42deg); }
input.wcheck[type="checkbox"] { width: 13px; height: 13px; margin-right: 3px; background: #e6e6e6; }
input.wcheck[type="checkbox"]:checked::after { left: 4px; top: 1px; width: 5px; height: 8px; border-color: #222; }

.properties { flex: 872 1 0; display: flex; flex-direction: column; background: #303030; border-radius: 5px; overflow: hidden; }
.phead { height: 29px; padding: 0 12px 0 11px; }
.phead .search { margin: 0 auto 0 98px; }
.phead .ib { width: 22px; }
.pmain { flex: 1; display: flex; }
.ptabs { width: 35px; background: #1d1d1d; padding-top: 12px; display: flex; flex-direction: column; gap: 9px; color: #b4b4b4; }
.ptabs button { width: 35px; height: 35px; padding-left: 1px; }
.ptabs .on { background: #303030; border-radius: 4px 0 0 4px; }
.pcontent { flex: 1; min-width: 0; padding: 0 10px; }
.crumbs { display: flex; align-items: center; height: 46px; gap: 10px; padding-left: 3px; }
.crumbs .c1 { margin-right: 9px; }
.crumbs button { margin-left: auto; padding-right: 4px; color: #8a8a8a; }
.addmod { display: flex; width: 100%; height: 24px; margin-top: 11px; padding: 0 0 0 9px; background: #545454; border-radius: 4px; }
.addmod span { flex: 1; text-align: center; }
.panel { margin-top: 12px; border: 1px solid #47628f; border-radius: 5px; background: #3d3d3d; }
.mhead { display: flex; align-items: center; height: 37px; padding: 4px 5px 9px 8px; }
.exp { width: 12px; margin-right: 7px; color: #b5b5b5; }
.mname { flex: 1; height: 24px; margin-left: 14px; padding-left: 8px; background: #1d1d1d; border-radius: 4px 0 0 4px; }
.mb { width: 25px; height: 24px; border-right: 1px solid #3a5a90; }
.mb.lit { border-color: #444; }
.del { width: 26px; height: 24px; }
.grip { margin-left: 12px; color: #aaa; }
.row { display: grid; grid-template-columns: 1fr 198px 35px; align-items: center; height: 31px; }
.row > label:first-child, .lab { text-align: right; padding-right: 13px; }
.field { width: 100%; height: 24px; border-radius: 4px; background: #545454; }
.num { text-align: center; }
.drop { display: flex; align-items: center; background: #282828; padding: 0 3px 0 9px; }
.drop select { flex: 1; }
.dot { width: 5px; height: 5px; margin-left: 11px; border-radius: 3px; background: #e2e2e2; }
.row .ck { display: flex; align-items: center; gap: 4px; padding: 0; }
.short { height: 24px; }
.gap { margin-top: 16px; }
.vg { display: flex; height: 23px; min-width: 0; }
.vgi { flex: 1; min-width: 0; display: flex; align-items: center; padding-left: 4px; background: #1d1d1d; border-radius: 4px 0 0 4px; }
.vgi input { flex: 1; width: 100%; }
.vg button { width: 25px; flex: none; background: #4a4a4a; color: #999; border-radius: 0 4px 4px 0; }
.off { color: #808080; }
.off .field { background: #474747; }
.off .dot { background: #6a6a6a; }
.subs { padding: 7px 0 0 27px; }
.subs button { height: 31px; gap: 4px; }

.statusbar { position: relative; display: flex; align-items: center; justify-content: space-between; height: 27px; padding: 1px 18px 0 14px; background: #181818; border-bottom: 1px solid #3a4654; color: #9c9c9c; }
.keys { display: flex; gap: 11px; }
.keys li { display: flex; align-items: center; gap: 3px; }
.keys li span { margin-left: 4px; }
kbd { width: 22px; height: 20px; border: 1px solid #8a8a8a; border-radius: 3px; font: 14px/18px Inter, sans-serif; display: grid; place-items: center; }
kbd.sm { font-size: 11px; justify-content: center; }
kbd svg { width: 16px; height: 16px; }
.m { width: 16px; height: 20px; margin-left: 2px; }
.keys li:first-child .m { margin-left: 0; }
.stats { display: flex; }
.stats li + li { border-left: 1px solid #8a8a8a; margin-left: 6px; padding-left: 5px; }
.watermark { position: absolute; left: 11px; top: -24px; display: flex; align-items: center; gap: 12px; opacity: .38; color: #fff; font: 700 44px/52px "DejaVu Sans", sans-serif; }
.watermark svg { width: 52px; height: 52px; }
.taskbar { height: 13px; overflow: hidden; background: linear-gradient(90deg, #1c212e 10%, #16205c 32%, #171f5a 50%, #1e1f42 58%, #16245c 66%, #1d2134 74%, #1d232b 90%); }
.taskbar svg { width: 100%; height: 14px; }
```
